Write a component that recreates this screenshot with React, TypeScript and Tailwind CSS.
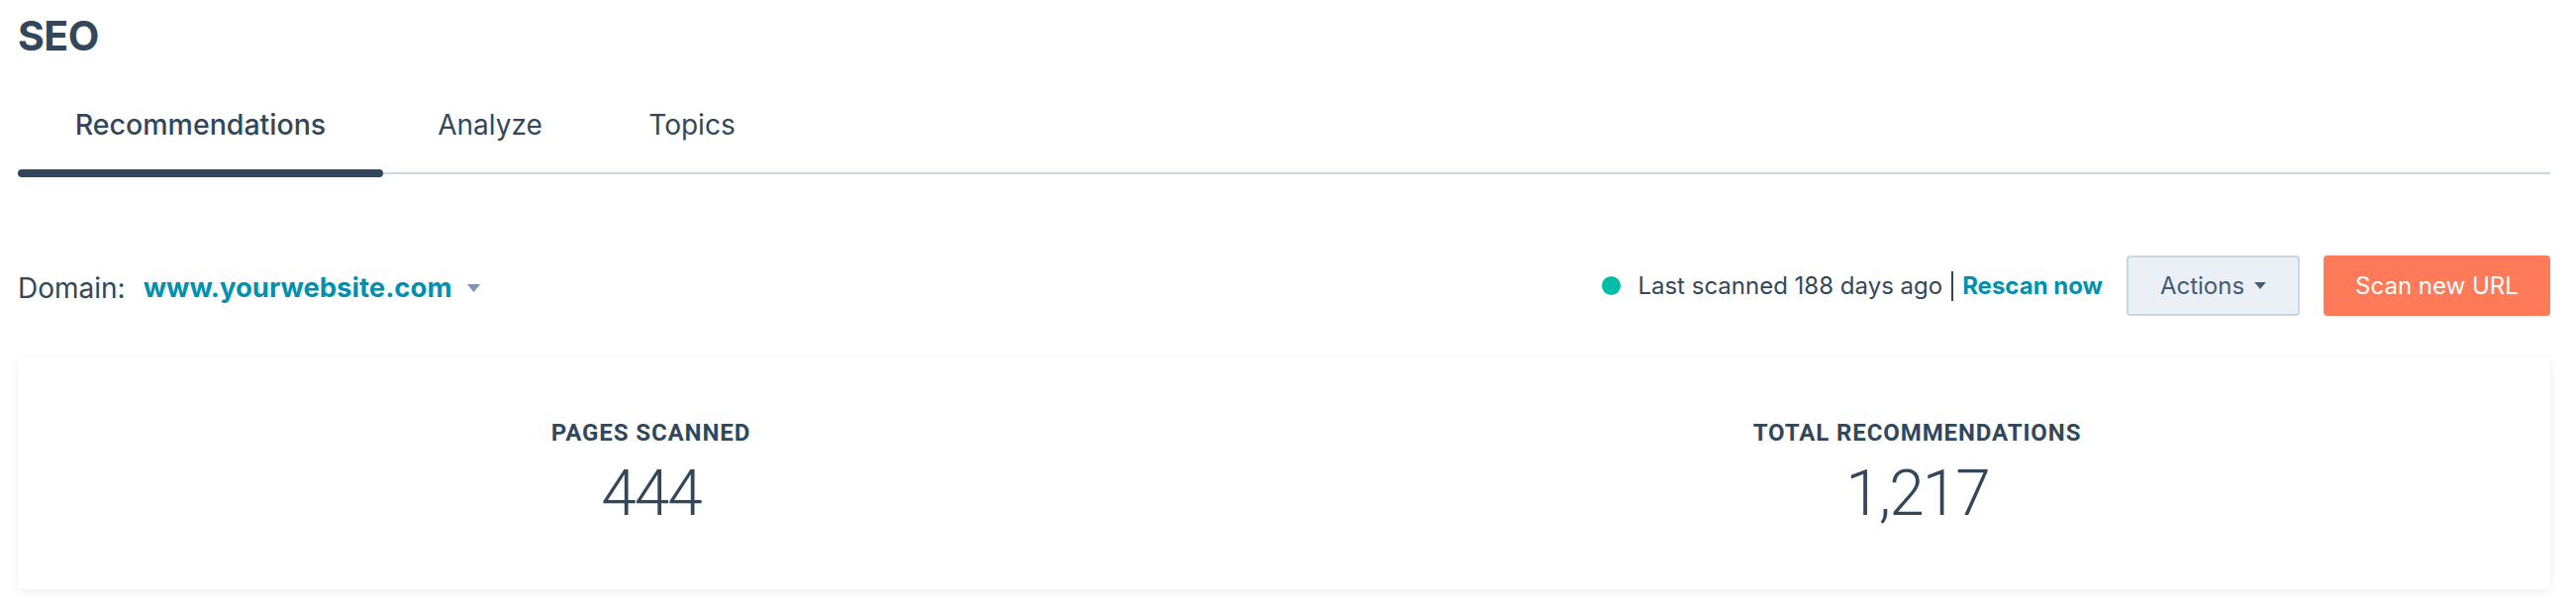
const Caret = ({ className }: { className: string }) => (
  <svg viewBox="0 0 10 6" className={className} fill="currentColor">
    <path d="M0 0h10L5 6z" />
  </svg>
);

const Stat = ({ label, value }: { label: string; value: string }) => (
  <div className="flex flex-col items-center pt-[62px]">
    <p className="font-['Roboto',sans-serif] text-[24px] font-bold uppercase leading-[28px] tracking-[0.9px] text-[#33475b]">
      {label}
    </p>
    <p className="mt-[12px] font-['Roboto',sans-serif] text-[64px] font-light leading-[72px] tracking-[-2px] text-[#33475b]">
      {value}
    </p>
  </div>
);

export default function App() {
  return (
    <div className="h-[614px] w-full bg-white pl-[18px] pr-[26px] font-['Inter',sans-serif] text-[#33475b]">
      <h1 className="pt-[14px] text-[41px] font-bold leading-[44px] tracking-[-0.5px]">SEO</h1>

      <div className="relative mt-[51px] flex border-b-2 border-[#cbd6e2]">
        <div className="relative w-[369px] pb-[31px] text-center text-[28.5px] font-medium leading-[34px]">
          Recommendations
          <span className="absolute -bottom-[5px] left-0 h-[8px] w-full rounded-full bg-[#33475b]" />
        </div>
        <div className="w-[216px] pb-[31px] text-center text-[28px] leading-[34px]">Analyze</div>
        <div className="w-[192px] pb-[31px] text-center text-[28px] leading-[34px]">Topics</div>
      </div>

      <div className="mt-[82px] flex h-[61px] items-center">
        <span className="pt-[4px] text-[28px]">Domain:</span>
        <span className="ml-[18px] pt-[4px] text-[27.5px] font-bold text-[#0091ae]">www.yourwebsite.com</span>
        <Caret className="ml-[14px] mt-[4px] h-[8px] w-[15px] text-[#7c98b6]" />

        <div className="ml-auto flex items-center">
          <span className="h-[19px] w-[19px] rounded-full bg-[#00bda5]" />
          <span className="ml-[17px] text-[24px]">Last scanned 188 days ago</span>
          <span className="ml-[9px] h-[30px] w-[2px] bg-[#33475b]" />
          <span className="ml-[9px] text-[24px] font-bold text-[#0091ae]">Rescan now</span>
          <button className="ml-[24px] flex h-[61px] w-[175px] items-center justify-center gap-[10px] rounded-[4px] border-2 border-[#cbd6e2] bg-[#eaf0f6] text-[24px] text-[#425b76]">
            Actions
            <Caret className="h-[7px] w-[12px]" />
          </button>
          <button className="ml-[24px] flex h-[61px] w-[229px] items-center justify-center rounded-[4px] bg-[#ff7a59] text-[24px] text-white">
            Scan new URL
          </button>
        </div>
      </div>

      <div className="mt-[42px] grid h-[234px] grid-cols-2 rounded-[3px] bg-white shadow-[0_2px_10px_rgba(0,0,0,0.08)]">
        <Stat label="Pages scanned" value="444" />
        <Stat label="Total recommendations" value="1,217" />
      </div>
    </div>
  );
}
